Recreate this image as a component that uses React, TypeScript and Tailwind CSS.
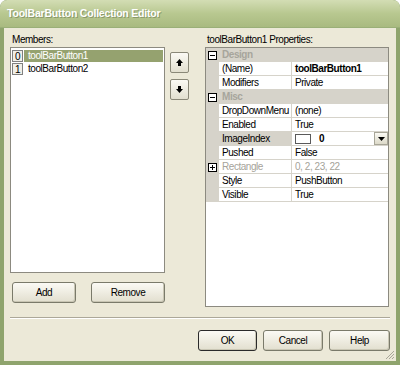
import React from 'react';

const font = { fontFamily: '"Liberation Sans", Arial, sans-serif' };

function XpButton({ label, w, bold = false }: { label: string; w: string; bold?: boolean }) {
  return (
    <div
      className={`${w} h-[21px] flex items-center justify-center rounded-[3px] border ${bold ? 'border-[#2a2a2a]' : 'border-[#7a7a6a]'} bg-gradient-to-b from-[#fbfaf4] to-[#e2dfcf] text-[10px] text-black shadow-[inset_-1px_-1px_0_#c9c6b4]`}
    >
      {label}
    </div>
  );
}

function ArrowButton({ up }: { up: boolean }) {
  return (
    <div className="w-[19px] h-[21px] flex items-center justify-center rounded-[2px] border border-[#8a8878] bg-gradient-to-b from-[#fbfaf4] to-[#e2dfcf]">
      <svg width="9" height="9" viewBox="0 0 9 9">
        {up ? (
          <path d="M4.5 1 L8 5 L6 5 L6 8 L3 8 L3 5 L1 5 Z" fill="#000" />
        ) : (
          <path d="M4.5 8 L8 4 L6 4 L6 1 L3 1 L3 4 L1 4 Z" fill="#000" />
        )}
      </svg>
    </div>
  );
}

function PlusMinus({ plus }: { plus: boolean }) {
  return (
    <div className="w-[9px] h-[9px] border border-black bg-white relative flex items-center justify-center">
      <div className="w-[5px] h-[1px] bg-black" />
      {plus && <div className="absolute w-[1px] h-[5px] bg-black" />}
    </div>
  );
}

type Row =
  | { kind: 'cat'; label: string }
  | { kind: 'prop'; name: string; value: string; bold?: boolean; dim?: boolean; plus?: boolean; selected?: boolean; swatch?: boolean };

const rows: Row[] = [
  { kind: 'cat', label: 'Design' },
  { kind: 'prop', name: '(Name)', value: 'toolBarButton1', bold: true },
  { kind: 'prop', name: 'Modifiers', value: 'Private' },
  { kind: 'cat', label: 'Misc' },
  { kind: 'prop', name: 'DropDownMenu', value: '(none)' },
  { kind: 'prop', name: 'Enabled', value: 'True' },
  { kind: 'prop', name: 'ImageIndex', value: '0', selected: true, swatch: true },
  { kind: 'prop', name: 'Pushed', value: 'False' },
  { kind: 'prop', name: 'Rectangle', value: '0, 2, 23, 22', dim: true, plus: true },
  { kind: 'prop', name: 'Style', value: 'PushButton' },
  { kind: 'prop', name: 'Visible', value: 'True' },
];

function GridRow({ row }: { row: Row }) {
  if (row.kind === 'cat') {
    return (
      <div className="flex h-[14px] bg-[#d6d3ca]">
        <div className="w-[13px] flex items-center justify-center">
          <PlusMinus plus={false} />
        </div>
        <div className="pl-[3px] text-[10px] leading-[14px] font-bold text-[#a7a59c]">{row.label}</div>
      </div>
    );
  }
  return (
    <div className="flex h-[14px]">
      <div className="w-[13px] bg-[#d6d3ca] flex items-center justify-center">
        {row.plus && <PlusMinus plus />}
      </div>
      <div
        className={`w-[73px] pl-[3px] border-b border-r border-[#d6d3ca] text-[10px] leading-[13px] whitespace-nowrap overflow-hidden ${row.selected ? 'bg-[#d6d3ca]' : 'bg-white'} ${row.dim ? 'text-[#a5a39a]' : 'text-black'}`}
      >
        {row.name}
      </div>
      <div
        className={`flex-1 flex items-center pl-[3px] border-b border-[#d6d3ca] bg-white text-[10px] leading-[13px] whitespace-nowrap ${row.bold ? 'font-bold' : ''} ${row.dim ? 'text-[#a5a39a]' : 'text-black'}`}
      >
        {row.swatch ? (
          <>
            <div className="w-[16px] h-[10px] border border-[#5a5a5a] bg-white mr-[8px]" />
            <span className="font-bold flex-1">{row.value}</span>
            <div className="w-[14px] h-[13px] flex items-center justify-center bg-gradient-to-b from-[#fbfaf4] to-[#dcd9c8] border border-[#a8a698]">
              <svg width="7" height="4" viewBox="0 0 7 4">
                <path d="M0 0 L7 0 L3.5 4 Z" fill="#000" />
              </svg>
            </div>
          </>
        ) : (
          row.value
        )}
      </div>
    </div>
  );
}

export default function App() {
  return (
    <div style={font} className="w-[400px] h-[365px] bg-[#8fa46d] rounded-t-[7px] flex flex-col overflow-hidden">
      <div className="h-[28px] shrink-0 rounded-t-[7px] bg-gradient-to-b from-[#d3ddb4] via-[#b8c890] to-[#a9ba80] flex items-center pl-[7px] border-b border-[#9aaf78]">
        <span className="text-[10.5px] font-bold text-white tracking-[-0.2px] [text-shadow:1px_1px_0_#8a9a6a]">
          ToolBarButton Collection Editor
        </span>
      </div>
      <div className="flex-1 mx-[4px] mb-[4px] bg-[#ece9d8] flex flex-col px-[6px] pt-[5px] relative tracking-[-0.45px]">
        <div className="flex">
          <div className="w-[155px] flex flex-col">
            <div className="h-[14px] pl-[2px] text-[10px] leading-[14px] text-black">Members:</div>
            <div className="h-[226px] border border-[#8c8a80] bg-white p-[1px]">
              <div className="flex h-[13px] items-center">
                <div className="w-[11px] h-[12px] border border-[#808080] bg-[#f0efe8] text-[10px] leading-[11px] text-center">0</div>
                <div className="flex-1 h-[12px] ml-[1px] bg-[#95a26f] text-white text-[10px] leading-[12px] pl-[4px]">toolBarButton1</div>
              </div>
              <div className="flex h-[13px] items-center">
                <div className="w-[11px] h-[12px] border border-[#808080] bg-[#f0efe8] text-[10px] leading-[11px] text-center">1</div>
                <div className="flex-1 h-[12px] ml-[1px] text-black text-[10px] leading-[12px] pl-[4px]">toolBarButton2</div>
              </div>
            </div>
            <div className="flex mt-[9px] pl-[2px] gap-[15px]">
              <XpButton label="Add" w="w-[64px]" />
              <XpButton label="Remove" w="w-[74px]" />
            </div>
          </div>
          <div className="ml-[5px] pt-[19px] flex flex-col gap-[6px]">
            <ArrowButton up />
            <ArrowButton up={false} />
          </div>
          <div className="ml-[16px] w-[184px] flex flex-col">
            <div className="h-[14px] pl-[2px] text-[10px] leading-[14px] text-black">toolBarButton1 Properties:</div>
            <div className="h-[260px] border border-[#8c8a80] bg-white">
              {rows.map((r, i) => (
                <GridRow key={i} row={r} />
              ))}
            </div>
          </div>
        </div>
        <div className="mt-[10px] h-[2px] border-t border-[#aca899] border-b border-b-white" />
        <div className="flex justify-end gap-[6px] mt-[11px]">
          <XpButton label="OK" w="w-[59px]" bold />
          <XpButton label="Cancel" w="w-[60px]" />
          <XpButton label="Help" w="w-[61px]" />
        </div>
        <svg className="absolute right-[1px] bottom-[1px]" width="11" height="11" viewBox="0 0 11 11">
          <path d="M10 2 L2 10 M10 5 L5 10 M10 8 L8 10" stroke="#a8a698" strokeWidth="1" />
        </svg>
      </div>
    </div>
  );
}
